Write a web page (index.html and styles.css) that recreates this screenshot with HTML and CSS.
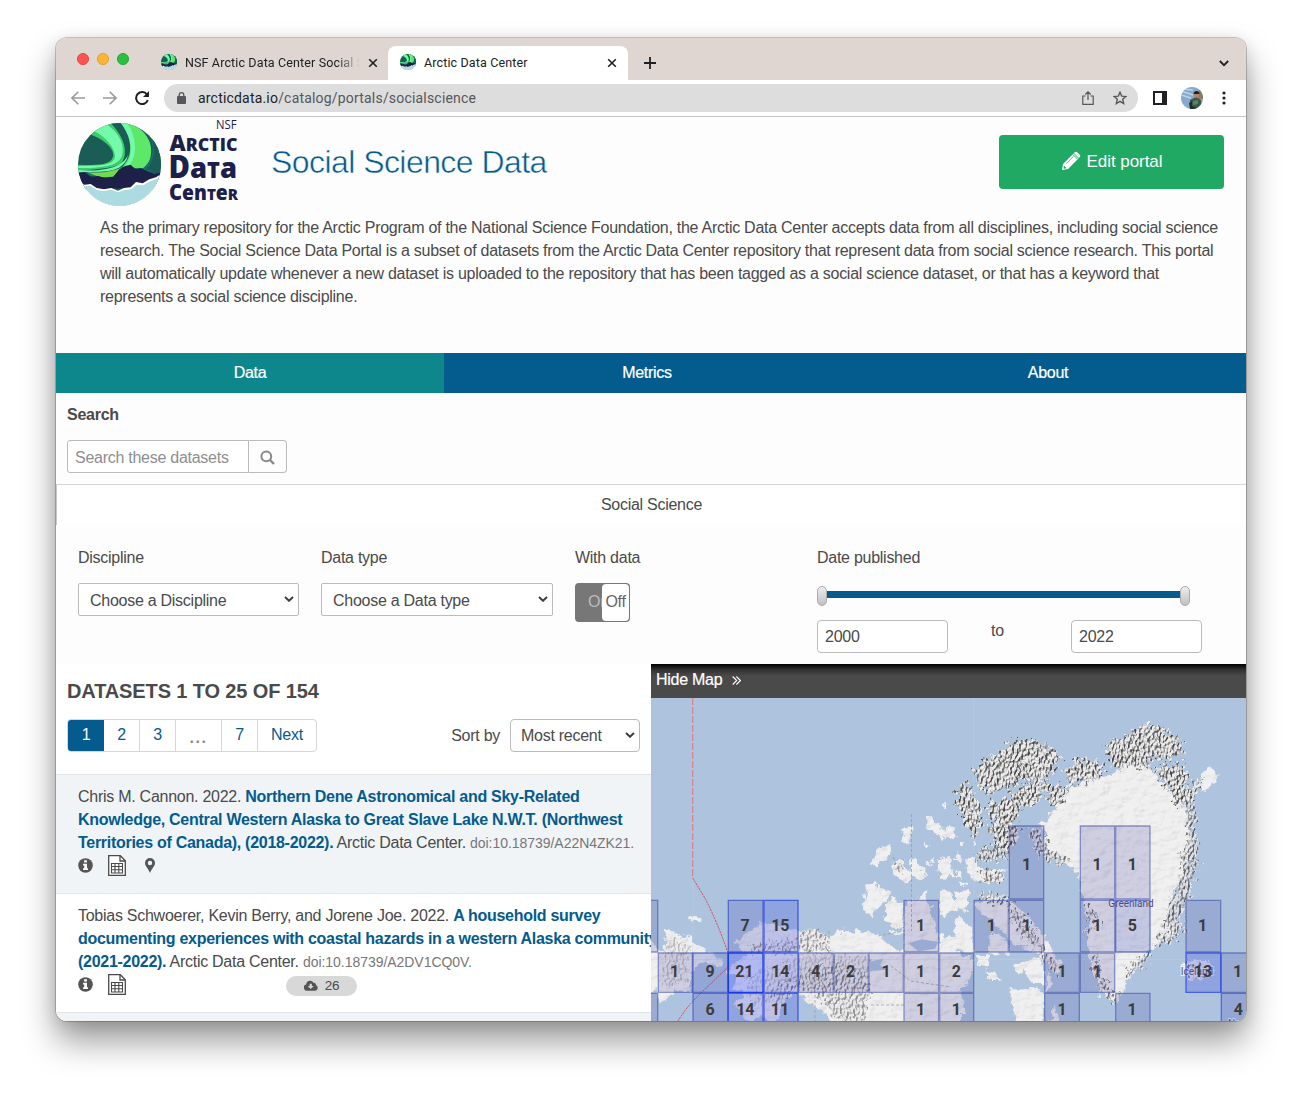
FILE: index.html
```html
<!DOCTYPE html>
<html lang="en">
<head>
<meta charset="utf-8">
<title>Arctic Data Center</title>
<link rel="stylesheet" href="styles.css">
</head>
<body>
<svg class="defs" width="0" height="0" aria-hidden="true">
  <defs>
    <clipPath id="globe"><circle cx="208.500" cy="403.500" r="124.500"/></clipPath>
    <symbol id="logo" viewBox="84 279 249 249">
      <g clip-path="url(#globe)">
        <rect x="84" y="279" width="249" height="249" fill="#1a5c56"/>
        <path d="M118 312 L150 283 L190 279 C216 300 236 332 236 368 C232 396 206 412 150 416 L84 424 L84 404 C140 406 186 408 190 376 C190 350 156 326 118 312Z" fill="#3ecb6b"/>
        <path d="M134 304 L168 282 C200 302 222 335 218 368 C214 402 180 414 84 414 L84 408 C150 408 196 408 195 376 C190 345 165 322 134 304Z" fill="#73fbab"/>
        <path d="M206 279 L240 279 C290 300 316 345 298 394 C290 410 280 417 264 418 L240 408 L212 418 C243 385 246 335 206 279Z" fill="#5ee86a"/>
        <path d="M212 279 L232 279 C262 325 262 380 236 408 L224 410 C252 375 248 330 212 279Z" fill="#73fbab"/>
        <path d="M182 279 L212 279 C252 330 248 386 214 411 L190 420 C236 396 240 340 182 279Z" fill="#1a5c56"/>
        <path d="M84 421 C160 424 218 414 234 374 C228 410 196 424 150 425 L84 427Z" fill="#73fbab"/>
        <path d="M270 284 C318 322 322 380 276 418 L296 426 L336 412 L336 300Z" fill="#1d7068"/>
        <path d="M292 298 C322 340 316 396 286 418 L336 430 L336 310Z" fill="#1a5c56"/>
        <path d="M84 427 C150 428 190 424 214 410 L228 410 L150 440 L84 436Z" fill="#1f776b"/>
        <path d="M112 427 C160 430 192 424 216 412 L190 440 L150 442Z" fill="#75d94e"/>
        <path d="M84 430 L104 426 L124 440 L146 438 L166 445 L190 440 L208 418 L226 408 L242 404 L254 416 L272 414 L292 424 L312 432 L336 428 L336 470 L84 480Z" fill="#1d2048"/>
        <path d="M84 456 L104 464 L122 462 L140 474 L162 478 L184 474 L204 482 L222 474 L242 472 L258 456 L278 460 L298 448 L318 442 L336 430 L336 530 L84 530Z" fill="#fff"/>
        <path d="M84 464 L106 469 L122 468 L140 480 L162 483 L184 479 L204 487 L224 480 L244 478 L260 464 L280 466 L300 454 L320 447 L336 436 L336 530 L84 530Z" fill="#acdce2"/>
      </g>
    </symbol>
    <symbol id="close" viewBox="0 0 10 10"><path d="M1.200 1.200 8.800 8.800M8.800 1.200 1.200 8.800" stroke="#202124" stroke-width="1.600" fill="none"/></symbol>
    <symbol id="chev" viewBox="0 0 10 6"><path d="M1 1 5 4.800 9 1" stroke="#3c3c3c" stroke-width="1.900" fill="none"/></symbol>
    <symbol id="info" viewBox="0 0 16 16"><circle cx="8" cy="8" r="7.800" fill="#555"/><path d="M6.500 2.500h3v2.400h-3zM5.400 6.200h4.200v4.800h1.100v1.800H5.400V11h1.200V8H5.400z" fill="#fff"/></symbol>
    <symbol id="sheet" viewBox="0 0 18 21"><path d="M.7.700h11.600l5 5v14.600H.7z" fill="#fff" stroke="#4a4a4a" stroke-width="1.300"/><path d="M12 .800v5.200h5.300" fill="none" stroke="#4a4a4a" stroke-width="1.300"/><path d="M3.500 8.500h11v9.500h-11zM3.500 11.500h11M3.500 14.700h11M7 8.500V18M10.800 8.500V18" fill="none" stroke="#4a4a4a" stroke-width="1.100"/></symbol>
    <filter id="land" x="-5%" y="-5%" width="110%" height="110%" color-interpolation-filters="sRGB">
      <feTurbulence type="fractalNoise" baseFrequency=".045" numOctaves="3" seed="4" result="n"/>
      <feDisplacementMap in="SourceGraphic" in2="n" scale="30" xChannelSelector="R" yChannelSelector="G" result="d"/>
      <feTurbulence type="fractalNoise" baseFrequency=".03 .045" numOctaves="3" seed="9"/>
      <feDiffuseLighting surfaceScale="5" diffuseConstant="1.100" lighting-color="#fff" result="l"><feDistantLight azimuth="225" elevation="64"/></feDiffuseLighting>
      <feComposite in="l" in2="d" operator="in" result="s"/>
      <feColorMatrix in="s" values=".25 0 0 0 .69  0 .25 0 0 .69  0 0 .25 0 .69  0 0 0 1 0"/>
    </filter>
    <filter id="rock" x="-5%" y="-5%" width="110%" height="110%" color-interpolation-filters="sRGB">
      <feTurbulence type="fractalNoise" baseFrequency=".060" numOctaves="3" seed="11" result="n"/>
      <feDisplacementMap in="SourceGraphic" in2="n" scale="56" xChannelSelector="R" yChannelSelector="G" result="d"/>
      <feTurbulence type="fractalNoise" baseFrequency=".150 .090" numOctaves="2" seed="3"/>
      <feDiffuseLighting surfaceScale="16" diffuseConstant="1.100" lighting-color="#fff" result="l"><feDistantLight azimuth="215" elevation="56"/></feDiffuseLighting>
      <feComposite in="l" in2="d" operator="in" result="s"/>
      <feColorMatrix in="s" values=".66 0 0 0 .27  0 .66 0 0 .27  0 0 .66 0 .27  0 0 0 1 0"/>
    </filter>
  </defs>
</svg>

<div class="window">
  <div class="tabstrip">
    <div class="lights"><i class="red"></i><i class="amber"></i><i class="green"></i></div>
    <div class="tab">
      <svg class="fav"><use href="#logo"/></svg>
      <span class="tab-title fade">NSF Arctic Data Center Social S</span>
      <svg class="x"><use href="#close"/></svg>
    </div>
    <div class="tab active">
      <svg class="fav"><use href="#logo"/></svg>
      <span class="tab-title">Arctic Data Center</span>
      <svg class="x"><use href="#close"/></svg>
    </div>
    <svg class="plus" viewBox="0 0 12 12"><path d="M6 0v12M0 6h12" stroke="#202124" stroke-width="1.800"/></svg>
    <svg class="down" viewBox="0 0 10 7"><path d="M.8 1 5 5.200 9.200 1" fill="none" stroke="#202124" stroke-width="1.800"/></svg>
  </div>
  <div class="toolbar">
    <svg class="nav-ic" viewBox="0 0 14 14"><path d="M14 7H1M7.300.700 1 7l6.300 6.300" fill="none" stroke="#9b9b9b" stroke-width="1.600"/></svg>
    <svg class="nav-ic" viewBox="0 0 14 14"><path d="M0 7h13M6.700.700 13 7l-6.300 6.300" fill="none" stroke="#9b9b9b" stroke-width="1.600"/></svg>
    <svg class="nav-ic" viewBox="0 0 14 14"><path d="M12 3.600A6 6 0 1 0 12.800 9" fill="none" stroke="#202124" stroke-width="2"/><path d="M14 0v6H8z" fill="#202124"/></svg>
    <div class="omnibox">
      <svg class="lock" viewBox="0 0 9 12"><path d="M.5 4.600h8v6.900h-8z" fill="#55575b" stroke="#55575b" stroke-linejoin="round"/><path d="M2.200 5V3a2.300 2.300 0 0 1 4.600 0v2" fill="none" stroke="#55575b" stroke-width="1.300"/></svg>
      <span class="url"><b>arcticdata.io</b>/catalog/portals/socialscience</span>
      <svg class="share" viewBox="0 0 12 14"><path d="M3.500 5H.8v8.300h10.400V5H8.500M6 9V1M3.300 3.500 6 .900l2.700 2.600" fill="none" stroke="#55575b" stroke-width="1.200"/></svg>
      <svg class="star" viewBox="0 0 14 14"><path d="M7 1.200l1.700 3.900 4.200.400-3.200 2.800 1 4.200L7 10.300l-3.700 2.200 1-4.200L1.100 5.500l4.200-.400z" fill="none" stroke="#55575b" stroke-width="1.400"/></svg>
    </div>
    <svg class="panel-ic" viewBox="0 0 14 14"><path d="M0 0h14v14H0zM2 2v10h7V2z" fill="#202124" fill-rule="evenodd"/></svg>
    <svg class="avatar" viewBox="0 0 22 22"><clipPath id="av"><circle cx="11" cy="11" r="11"/></clipPath><g clip-path="url(#av)"><path fill="#86a9cd" d="M0 0h22v22H0z"/><path d="M0 4l12 4M0 8l10 3M2 2l10 1" stroke="#bcd2e8" stroke-width="1.500"/><path fill="#8a7d62" d="M18 0h4v12h-5z"/><path fill="#3c5948" d="M9 13l6-3 5 3 1 9H9z"/><circle cx="15.500" cy="8" r="2.600" fill="#b98366"/><path d="M12.500 7c0-4 6-4 6 0z" fill="#221f22"/><path fill="#22302c" d="M8 16l3-2v5l7 3H9z"/><path fill="#5a8268" d="M12 14l5-1v4l-5 1z"/></g></svg>
    <svg class="dots" viewBox="0 0 4 14"><circle cx="2" cy="2" r="1.600"/><circle cx="2" cy="7" r="1.600"/><circle cx="2" cy="12" r="1.600"/></svg>
  </div>

  <header class="head">
    <div class="brand">
      <svg class="mark"><use href="#logo"/></svg>
      <svg class="wordmark" viewBox="0 0 70 88">
        <text class="nsf" x="46" y="11.500" textLength="20.500" lengthAdjust="spacingAndGlyphs">NSF</text>
        <text x="-.5" y="33.500" textLength="68" lengthAdjust="spacingAndGlyphs"><tspan font-size="22">A</tspan><tspan font-size="17.500">RCTIC</tspan></text>
        <text x="-1.500" y="60.500" textLength="68.500" lengthAdjust="spacingAndGlyphs"><tspan font-size="31">D</tspan><tspan font-size="29">a</tspan><tspan font-size="23">T</tspan><tspan font-size="29">a</tspan></text>
        <text x="-1" y="83" textLength="69" lengthAdjust="spacingAndGlyphs"><tspan font-size="22">C</tspan><tspan font-size="21">en</tspan><tspan font-size="16.500">T</tspan><tspan font-size="21">e</tspan><tspan font-size="16.500">R</tspan></text>
      </svg>
      <h1>Social Science Data</h1>
      <button class="edit"><svg viewBox="0 0 20 20"><path d="M1 19l1-6L12.500 2.500l5 5L7 18z" fill="#fff"/><path d="M13.500 1.500c1-1 2-1 3 0l2 2c1 1 1 2 0 3l-.6.600-5-5z" fill="#fff"/><path d="M12 3.600l4.600 4.600" stroke="#1fa962" stroke-width=".900"/><path d="M5.500 12.500l7-7" stroke="#1fa962" stroke-width=".700"/><path d="M2.800 14.500l2.800 2.800-3 .400z" fill="#1fa962"/></svg>Edit portal</button>
    </div>
    <p class="desc">As the primary repository for the Arctic Program of the National Science Foundation, the Arctic Data Center accepts data from all disciplines, including social science<br>research. The Social Science Data Portal is a subset of datasets from the Arctic Data Center repository that represent data from social science research. This portal<br>will automatically update whenever a new dataset is uploaded to the repository that has been tagged as a social science dataset, or that has a keyword that<br>represents a social science discipline.</p>
  </header>
  <nav class="tabs"><a class="on">Data</a><a>Metrics</a><a>About</a></nav>
  <section class="search">
    <label>Search</label>
    <div class="search-box"><input placeholder="Search these datasets"><button><svg viewBox="0 0 15 15"><circle cx="6.300" cy="6.300" r="4.900" fill="none" stroke="#888" stroke-width="2"/><path d="M10 10l4 4" stroke="#888" stroke-width="2.400"/></svg></button></div>
  </section>
  <div class="strip">Social Science</div>
  <section class="filters">
    <div><label>Discipline</label><div class="select w1">Choose a Discipline<svg><use href="#chev"/></svg></div></div>
    <div><label>Data type</label><div class="select w2">Choose a Data type<svg><use href="#chev"/></svg></div></div>
    <div><label>With data</label><div class="toggle"><span>On</span><b>Off</b></div></div>
    <div><label>Date published</label>
      <div class="slider"><i></i><u></u><i></i></div>
      <div class="years"><span>2000</span><em>to</em><span>2022</span></div>
    </div>
  </section>
  <main class="results">
    <div class="list">
      <h2>DATASETS 1 TO 25 OF 154</h2>
      <div class="pager-row">
        <div class="pager"><a class="cur">1</a><a>2</a><a>3</a><a class="dot">...</a><a>7</a><a class="next">Next</a></div>
        <span class="sort">Sort by</span>
        <div class="select w3">Most recent<svg><use href="#chev"/></svg></div>
      </div>
      <article class="tint">
        <p>Chris M. Cannon. 2022. <b>Northern Dene Astronomical and Sky-Related</b><br><b>Knowledge, Central Western Alaska to Great Slave Lake N.W.T. (Northwest</b><br><b>Territories of Canada), (2018-2022).</b> Arctic Data Center. <small>doi:10.18739/A22N4ZK21.</small></p>
        <div class="icons"><svg class="i1"><use href="#info"/></svg><svg class="i2"><use href="#sheet"/></svg><svg class="i3" viewBox="0 0 10 15"><path d="M5 0a5 5 0 0 1 5 5c0 3-3 5-5 10C3 10 0 8 0 5a5 5 0 0 1 5-5zm0 2.800a2.200 2.200 0 1 0 0 4.400 2.200 2.200 0 0 0 0-4.400z" fill="#555" fill-rule="evenodd"/></svg></div>
      </article>
      <article>
        <p>Tobias Schwoerer, Kevin Berry, and Jorene Joe. 2022. <b>A household survey</b><br><b>documenting experiences with coastal hazards in a western Alaska community</b><br><b>(2021-2022).</b> Arctic Data Center. <small>doi:10.18739/A2DV1CQ0V.</small></p>
        <div class="icons"><svg class="i1"><use href="#info"/></svg><svg class="i2"><use href="#sheet"/></svg><span class="badge"><svg viewBox="0 0 15 11"><path d="M3.500 11A3.400 3.400 0 0 1 2.400 4.300 4.200 4.200 0 0 1 10.300 2.700 2.400 2.400 0 0 1 13 5.300 3 3 0 0 1 12 11z" fill="#555"/><path d="M6 3.500h2.400V6h2L7.200 9.300 4 6h2z" fill="#d8d8d8"/></svg>26</span></div>
      </article>
      <article class="tint"></article>
    </div>
    <div class="map">
      <div class="hide">Hide Map <svg viewBox="0 0 9 9"><path d="M.7.500l4 4-4 4M4.400.500l4 4-4 4" fill="none" stroke="#fff" stroke-width="1.100"/></svg></div>
      <svg class="chart" viewBox="0 0 595 323">
        <rect width="595" height="323" fill="#adc3de"/>
        <g transform="translate(-1 -3) scale(.33333)">
          <g filter="url(#land)">
            <path d="M-20 740 L5 735 20 760 40 775 45 705 80 712 128 735 175 770 220 800 205 820 165 800 140 815 122 830 124 890 80 885 30 930 20 880 -20 900Z"/>
            <path d="M118 672l16-10 18 6-8 12-22 2z"/>
            <path d="M255 745 L300 705 345 680 400 700 445 705 500 708 530 730 550 715 590 705 610 720 620 700 640 715 660 712 700 735 745 770 765 772 762 700 770 620 830 590 845 660 860 710 867 740 930 770 930 1000 560 1000 530 955 480 925 440 890 400 920 370 1000 330 960 300 990 260 930 280 890 240 880 260 850 235 830 260 800 300 775Z"/>
            <path d="M648 570l25-5 25 15 25 15-15 25-30 20-12 32-30-30z"/>
            <path d="M705 635l20-30 30 20 10 80-30-12-30-20z"/><path d="M665 500l20-40 40-8-5 30-30 22-20 10z"/>
            <path d="M720 520l25-28 30 35 15-45 20 40 18-4-5 25-60 20-30-20z"/><path d="M755 405l20-12 12 16-10 42-22-12 10-22z"/>
            <path d="M828 365l20 5 20 25 12 35-30-20-20-15z"/><path d="M822 440l8 0 5 20-8-2z"/><path d="M860 500l40-15 10 60-45-20z"/><path d="M876 322l10 0 4 18-8 0z"/><path d="M838 490l10 5-4 20-8-8z"/>
            <path d="M868 600l32-15 20 60-40 10z"/><path d="M715 712l45-8 5 16-30 4z"/>
          </g>
          <path d="M775 745l40-12 50 8-10 20-50 8zM660 800l40-10-10 20 20 14-50 4z" fill="#adc3de"/>
          <g filter="url(#rock)" opacity=".550"><path d="M300 750 L440 730 445 770 300 772ZM360 880 L420 850 560 800 640 830 660 900 640 980 570 980 520 920 440 880 380 940ZM446 710l60 0 40 60-100 0zM730 500l40 10-20 30z"/></g>
          <g filter="url(#rock)" opacity=".300"><path d="M50 720l70 20 0 50-20 80-60 0zM280 850l160-60 120-10 100 10-10 110-200-20-140 60z"/></g>
        </g>
        <g transform="translate(289 -3) scale(.33333)">
          <g filter="url(#land)">
            <path d="M320 380 L345 330 370 290 430 260 510 240 560 205 620 215 660 250 700 290 740 340 750 400 745 470 730 540 700 590 680 680 720 700 680 735 630 765 600 800 570 830 550 890 530 925 495 910 470 860 450 800 440 740 450 690 430 600 410 530 380 500 330 480 305 440 320 420 295 385Z"/>
            <path d="M785 245l20-25 35 15-10 25-40 30-10-20z"/><path d="M725 810l25-10 30-12 30 15 12 30-35 20-40-2z"/>
            <path d="M20 395l25 5 5 25-20 10-20-15zM0 395l15 0 0 40-15-2zM45 475l20 5 0 25-20-5zM0 490l30 5-5 50-25 5zM75 490l30 0 10 35 75 0 0 35-60 5-45-20zM45 530l15 0 5 25-15-5zM0 590l35 0 0 60-25 20-10-20zM45 590l45-5-10 60-35-5zM50 660l30 20 20 30 0 60-60 0-40-10 0-40 40 5z"/>
            <path d="M60 440l14 4-4 14-12-4zM95 440l10-2 4 12-10 4zM5 325l10 2 2 12-10-4zM60 560l20 4-6 10-14-2z"/>
            <path d="M-10 780l105 0 5 60-40 50 20 60-90 40zM105 780l45 5 0 30-30-5zM135 820l30 20 15 15-25 0zM215 810l40-10 50-15 10 90-40-20zM215 880l60 0 40 20-10 95-70-5-20-60z"/>
            <path d="M110 620l40-20 60 20 60 50 60 80 40 60-20 20-60-60-80-30-50-60-50-40zM155 710l50 30 5 40-70-5zM320 820l20 40-20 40zM330 990l10-60 25 60z"/>
          </g>
          <g filter="url(#rock)">
            <path d="M88 225 L160 180 230 135 290 135 340 165 365 180 340 225 300 250 230 270 160 295 120 280 110 245Z"/>
            <path d="M180 320l80-50 70-20-20 60-70 40-30 50-40-20-30-40z"/>
            <path d="M45 320l25-65 20 15 15 45 25 25-5 50-25 35-30-50z"/><path d="M140 320l20 0 15 40-25 10zM320 310l30-40 30 0-10 50-40 20z"/>
            <path d="M140 400l60-30 40 30-10 40-40 40-20-40z"/>
            <path d="M372 225l40-30 30 10 20-20 30 30 0 30-70 20-40 0z"/><path d="M500 145l60-25 50-30 50 0 35 15-25 20 40 0 25 45-50 20-50 0-20 30-60-10-30 10-30-50z"/>
            <path d="M640 220l70-10 30-5-5 90 30-35 25-15-20 50-25 30-30 10-30-50z"/>
          </g>
          <g filter="url(#rock)" opacity=".800">
            <path d="M105 480l30-25 70-5-5 40-40 12-50-4z"/><path d="M265 395l45 20 15 40 60 40-15 10-60-10-40-60z"/>
            <path d="M735 300l35 20-5 80 15 60-15 80-15 60-30 60 20 45-60 40-50 15 40-50 15-80 30-50 10-80 20-80z"/>
            <path d="M110 610l40-15 60 10 10 25-50 0z"/><path d="M210 640l50 30 60 100 40 60-20 10-60-90-60-60z"/><path d="M430 630l30 10 20 50-20 10zM435 700l20 0-5 20-15 0zM450 780l20 0 15 50 20 40 35 40-10 15-40-20-25-60zM555 845l20-40 45-30 15-5-30 50-45 30z"/><path d="M735 805l40 0 30 15-10 25-45 5zM110 530l80 0-5 28-50 0z"/>
          </g>
        </g>
        <g stroke="#999" stroke-dasharray="3 2" fill="none" opacity=".700"><path d="M260.500 116v117M227 238l30-6M164 257v66M220 307h35M178 233v22M240 268l20 15 40 6"/></g>
        <path d="M41.700 0v323M322.700 0v250M0 261.500h595" stroke="#c5d4e6" stroke-width=".500" opacity=".700"/>
        <path d="M41.700 0V180" fill="none" stroke="#d9747e" stroke-dasharray="7 2"/><path d="M41.700 180L55 202Q67 226 77 255M77 269L51 294Q36 308 27 323" fill="none" stroke="#dc4550" stroke-dasharray="2 1"/>
        <g class="place"><text x="480" y="208.500" text-anchor="middle">Greenland</text><text x="546" y="277" text-anchor="middle">Iceland</text><text x="577" y="329">Norway</text></g>
        <g class="cells">
          <g transform="translate(-1 -3) scale(.33333)">
            <g class="c0"><path d="M-40 616H23V771H-40zM25 774H127V892H25zM-40 895H23V1000H-40zM446 774H550V892H446zM552 774H655V892H552zM657 774H760V892H657zM762 774H866V892H762zM869 774H971V892H869zM762 616H866V771H762zM762 895H866V1000H762zM869 895H971V1000H869z"/></g>
            <g class="c1"><path d="M129 774H233V892H129zM129 895H233V1000H129zM235 616H339V771H235z"/></g>
            <g class="c2"><path d="M342 616H444V771H342zM342 774H444V892H342zM342 895H444V1000H342zM235 895H339V1000H235z"/></g>
            <g class="c3"><path d="M235 774H339V892H235z"/></g>
            <text x="285" y="707">7</text><text x="391" y="707">15</text><text x="812" y="707">1</text>
            <text x="74" y="845">1</text><text x="180" y="845">9</text><text x="283" y="845">21</text><text x="391" y="845">14</text><text x="497" y="845">4</text><text x="602" y="845">2</text><text x="708" y="845">1</text><text x="812" y="845">1</text><text x="919" y="845">2</text>
            <text x="180" y="959">6</text><text x="286" y="959">14</text><text x="390" y="959">11</text><text x="812" y="959">1</text><text x="919" y="959">1</text>
          </g>
          <g transform="translate(289 -3) scale(.33333)">
            <g class="c0"><path d="M208 393H311V612H208zM421 393H524V612H421zM527 393H630V612H527zM102 616H205V771H102zM208 616H311V771H208zM421 616H524V771H421zM738 616H842V771H738zM314 774H418V892H314zM421 774H524V892H421zM844 774H950V892H844zM314 895H418V1000H314zM527 895H630V1000H527z"/></g>
            <g class="c1"><path d="M527 616H630V771H527zM844 895H950V1000H844z"/></g>
            <g class="c2"><path d="M738 774H842V892H738z"/></g>
            <text x="260" y="525">1</text><text x="471" y="525">1</text><text x="577" y="525">1</text>
            <text x="154" y="707">1</text><text x="260" y="707">1</text><text x="471" y="707">1</text><text x="577" y="707">5</text><text x="788" y="707">1</text>
            <text x="366" y="845">1</text><text x="471" y="845">1</text><text x="789" y="845">13</text><text x="893" y="845">1</text>
            <text x="366" y="959">1</text><text x="576" y="959">1</text><text x="895" y="959">4</text>
          </g>
        </g>
      </svg>
    </div>
  </main>
</div>
</body>
</html>
```
FILE: styles.css
```css
* { box-sizing: border-box; }
html, body { margin: 0; height: 1095px; overflow: hidden; background: #fff; }
body { font: 16px/23px "Liberation Sans", Arial, sans-serif; letter-spacing: -.266px; color: #4a4a4a; padding: 38px 56px; white-space: nowrap; }
.defs { position: absolute; }
svg { flex: none; display: block; }
button, input { font: inherit; letter-spacing: inherit; }
.window { width: 1190px; height: 983px; border-radius: 11px; overflow: hidden; background: #fdfdfd; display: flex; flex-direction: column; box-shadow: 0 0 0 1px rgba(0,0,0,.2), 0 20px 34px rgba(0,0,0,.4), 0 3px 16px rgba(0,0,0,.12); }
.window > * { flex: none; }

.tabstrip { height: 42px; background: #dfd6d1; display: flex; align-items: flex-end; font: 12.5px "Roboto", sans-serif; color: #202124; letter-spacing: .13px; }
.lights { display: flex; gap: 8px; padding: 0 0 15px 21px; width: 92px; }
.lights i { width: 12px; height: 12px; border-radius: 50%; }
.red { background: #fe5450; border: 1px solid #e0443e; }
.amber { background: #fdb537; border: 1px solid #dea123; }
.green { background: #29c13f; border: 1px solid #1aab29; }
.tab { height: 34px; display: flex; align-items: center; padding: 0 11px 2px 12px; width: 240px; }
.active { background: #fff; border-radius: 8px 8px 0 0; }
.fav { width: 16px; height: 16px; margin-right: 8px; }
.tab:not(.active) { margin-left: 1px; }
.tab-title { flex: 1; overflow: hidden; }
.fade { -webkit-mask-image: linear-gradient(90deg, #000 152px, transparent 175px); mask-image: linear-gradient(90deg, #000 152px, transparent 175px); }
.x { width: 10px; height: 10px; margin: 2px 0 0 8px; }
.plus { width: 12px; height: 12px; margin: 0 0 11px 16px; }
.down { width: 10px; height: 7px; margin: 0 17px 13px auto; }
.lights + .tab { width: 239px; padding-right: 10px; }

.toolbar { height: 37px; background: #fff; border-bottom: 1px solid #c4c4c4; display: flex; align-items: center; padding-left: 15px; }
.nav-ic { width: 14px; height: 14px; margin-right: 18px; }
.omnibox { width: 974px; height: 28px; margin-left: -3px; background: #ddd; border-radius: 14px; display: flex; align-items: center; padding: 0 11px 0 13px; font: 14px "Roboto", sans-serif; letter-spacing: .19px; color: #55575b; }
.lock { width: 9px; height: 12px; margin-right: 12px; }
.url { flex: 1; }
.url b { font-weight: 400; color: #202124; }
.share { width: 12px; height: 14px; margin-right: 19px; }
.star { width: 14px; height: 14px; }
.panel-ic { width: 14px; height: 14px; margin-left: 15px; }
.avatar { width: 22px; height: 22px; margin-left: 14px; }
.dots { width: 4px; height: 14px; margin-left: 19px; fill: #202124; }

.head { height: 236px; background: #fdfdfd; }
.brand { height: 99px; display: flex; align-items: flex-start; padding-left: 22px; }
.mark { width: 83px; height: 83px; margin-top: 6px; }
.wordmark { width: 70px; height: 88px; margin-left: 9px; fill: #1d2048; font: 800 20px "Open Sans", sans-serif; letter-spacing: 0; overflow: visible; }
.nsf { font: 400 12.5px "Open Sans", sans-serif; }
h1 { margin: 25px 0 0 31px; font: 400 32px/40px "Liberation Sans", Arial, sans-serif; letter-spacing: -.56px; color: #045b8d; -webkit-text-stroke: .5px #fdfdfd; }
.edit { margin: 18px 22px 0 auto; width: 225px; height: 54px; border: 0; border-radius: 4px; background: #1fa962; color: #fff; display: flex; align-items: center; justify-content: center; gap: 6px; font-size: 17px; letter-spacing: -.05px; padding-bottom: 3px; }
.edit svg { width: 20px; height: 20px; }
.desc { margin: 0 0 0 44px; }
.tabs { display: grid; grid-template-columns: 388px 406px 396px; height: 40px; line-height: 40px; text-align: center; color: #fff; background: #045b8d; -webkit-text-stroke: .2px #fff; }
.on { background: #0e878c; }
.search { height: 91px; padding: 10px 11px 0; }
.search label { display: block; font-weight: 700; }
.search-box { display: flex; margin-top: 14px; width: 220px; height: 33px; }
.search input { width: 182px; border: 1px solid #bbb; border-radius: 3px 0 0 3px; padding: 2px 0 0 7px; background: #fff; }
.search input::placeholder { color: #8e8e8e; }
.search button { width: 38px; border: 1px solid #bbb; border-left: 0; border-radius: 0 4px 4px 0; background: #fdfdfd; padding: 2px 0 0 11px; }
.search button svg { width: 15px; height: 15px; }
.strip { height: 41px; border-top: 1px solid #d6d6d6; border-left: 1px solid #c9c9c9; background: #fff; text-align: center; line-height: 40px; }
.filters { height: 139px; display: grid; grid-template-columns: 243px 254px 242px 385px; padding: 21px 0 0 22px; }
.filters label { display: block; height: 37px; }
.select { height: 33px; border: 1px solid #bbb; border-radius: 2px; background: #fff; display: flex; align-items: center; justify-content: space-between; padding: 2px 4px 0 11px; }
.select svg { width: 10px; height: 6px; margin-top: -4px; }
.w1 { width: 221px; }
.w2 { width: 232px; }
.w3 { width: 130px; border-radius: 4px; padding: 0 4px 0 10px; }
.w3 svg { margin-top: -2px; }
.toggle { width: 55px; height: 39px; border-radius: 4px; background: #777; display: flex; padding: 1px; }
.toggle span { width: 26px; padding-left: 12px; line-height: 35px; color: #bbb; overflow: hidden; }
.toggle b { width: 27px; border-radius: 4px; background: #fff; font-weight: 400; line-height: 36px; text-align: center; color: #666; }
.slider { width: 373px; height: 20px; margin-top: 3px; display: flex; }
.slider i { width: 10px; height: 20px; border: 1px solid #aaa; border-radius: 5px; background: linear-gradient(#eee, #c0c0c0); }
.slider u { flex: 1; height: 7px; margin-top: 5px; background: #045b8d; }
.years { display: flex; justify-content: space-between; margin-top: 14px; height: 33px; }
.years span { width: 131px; border: 1px solid #bbb; border-radius: 4px; background: #fff; padding: 0 7px; line-height: 31px; }
.years em { font-style: normal; margin: -1px 0 0 -24px; }

.results { display: grid; grid-template-columns: 595px 595px; height: 357px; }
.list { background: #fff; overflow: hidden; }
h2 { margin: 15px 11px 0; font: 700 20px/24px "Liberation Sans", Arial, sans-serif; letter-spacing: -.12px; }
.pager-row { display: flex; align-items: center; margin: 16px 11px 22px; height: 33px; }
.pager { display: flex; height: 33px; border: 1px solid #d6d6d6; border-radius: 4px; overflow: hidden; color: #045b8d; line-height: 30px; text-align: center; }
.pager a { width: 36px; border-right: 1px solid #d6d6d6; }
.pager .cur { background: #045b8d; color: #fff; border: 0; }
.pager .dot { width: 46px; color: #888; font-weight: 700; letter-spacing: 1.5px; line-height: 35px; }
.pager .next { width: 58px; border: 0; }
.sort { margin: -1px 10px 0 auto; }
article { height: 119px; border-top: 1px solid #e2e5e8; padding: 10px 0 0 22px; background: #fff; }
.tint { background: #f0f4f7; }
article p { margin: 0; }
article b { color: #045b8d; letter-spacing: -.285px; }
small { font-size: 14px; letter-spacing: -.04px; line-height: 20px; color: #777; }
.icons { display: flex; height: 22px; align-items: center; }
.i1 { width: 15px; height: 15px; margin-right: 15px; }
.i2 { width: 18px; height: 21px; margin-right: 19px; }
.i3 { width: 10px; height: 15px; }
.badge { width: 71px; height: 20px; border-radius: 10px; background: #d8d8d8; margin: 3px 0 0 141px; display: flex; align-items: center; justify-content: center; gap: 7px; font-size: 13.5px; }
.badge svg { width: 14px; height: 11px; }
.hide { height: 34px; background: linear-gradient(#000, #333 6px, #4a4a4a 12px); color: #fff; padding: 0 5px; line-height: 31px; display: flex; gap: 10px; -webkit-text-stroke: .2px #fff; }
.hide svg { width: 9px; height: 9px; margin-top: 12px; }
.map { overflow: hidden; }
.chart { width: 595px; height: 323px; letter-spacing: 0; }
.place { font: 10px "Roboto", sans-serif; fill: #4c4c60; stroke: #f1f1f5; stroke-width: 2px; paint-order: stroke; }
.cells text { font: 700 48px "Roboto", sans-serif; fill: #3c3c3c; text-anchor: middle; }
.cells path { stroke-width: 4px; }
.c0 { fill: rgba(75,75,165,.2); stroke: rgba(60,75,165,.55); }
.c1 { fill: rgba(75,85,190,.26); stroke: rgba(50,70,195,.65); }
.c2 { fill: rgba(75,90,225,.3); stroke: rgba(40,65,220,.75); }
.c3 { fill: rgba(70,90,250,.36); stroke: #1a3ae8; }
```
